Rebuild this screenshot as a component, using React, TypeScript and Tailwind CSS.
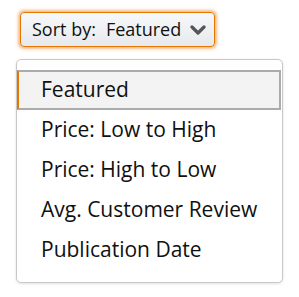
import React from "react";

const items = [
  "Featured",
  "Price: Low to High",
  "Price: High to Low",
  "Avg. Customer Review",
  "Publication Date",
];

export default function App() {
  return (
    <div
      className="w-[299px] h-[297px] bg-white overflow-hidden"
      style={{ fontFamily: '"Open Sans", "Noto Sans", sans-serif' }}
    >
      <div className="pt-[12px] pl-[20px]">
        <div className="w-[195px] h-[35px] flex items-center rounded-[4px] border border-[#e77600] bg-gradient-to-b from-[#f7f8fa] to-[#e7e9ec] shadow-[0_0_3px_2px_rgba(228,121,17,0.5)] pl-[11px] pr-[8px] text-[18px] text-[#0f1111]">
          <span>Sort by:</span>
          <span className="ml-[10px]">Featured</span>
          <svg
            className="ml-auto"
            width="16"
            height="10"
            viewBox="0 0 16 10"
            fill="none"
          >
            <polyline
              points="2,2 8,8 14,2"
              stroke="#555555"
              strokeWidth="3.2"
              strokeLinecap="round"
              strokeLinejoin="round"
            />
          </svg>
        </div>
      </div>
      <div className="ml-[16px] mt-[12px] w-[267px] h-[224px] border border-[#c8c8c8] rounded-[5px] shadow-[0_1px_3px_rgba(0,0,0,0.12)] pt-[10px] text-[21px] text-[#0f1111] bg-white">
        {items.map((it, i) =>
          i === 0 ? (
            <div
              key={it}
              className="h-[40px] flex items-center bg-[#f3f3f3] border-2 border-[#ababab] border-l-[#e77600] pl-[22px] mr-[1px]"
            >
              {it}
            </div>
          ) : (
            <div key={it} className="h-[40px] flex items-center pl-[24px]">
              {it}
            </div>
          )
        )}
      </div>
    </div>
  );
}
